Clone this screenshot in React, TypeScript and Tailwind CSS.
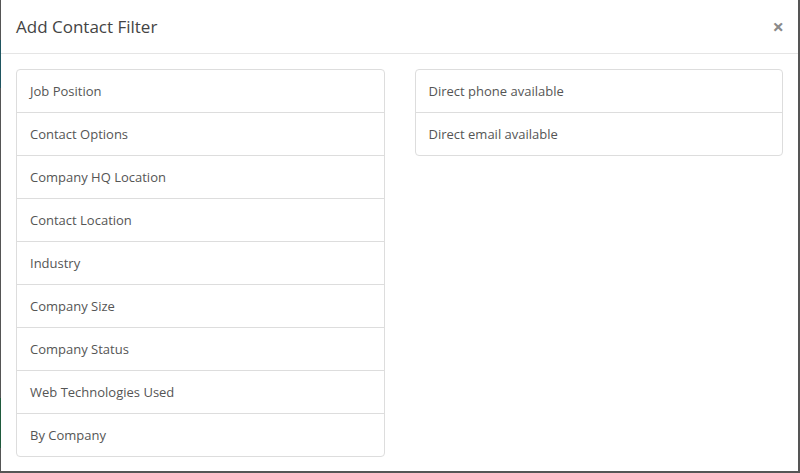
const LEFT = [
  'Job Position',
  'Contact Options',
  'Company HQ Location',
  'Contact Location',
  'Industry',
  'Company Size',
  'Company Status',
  'Web Technologies Used',
  'By Company',
]

const RIGHT = ['Direct phone available', 'Direct email available']

function FilterList({ items }: { items: string[] }) {
  return (
    <ul className="flex flex-col rounded-[4px] border border-[#dddddd] bg-white">
      {items.map((label, i) => (
        <li
          key={label}
          className={`px-[13px] pt-[11px] text-[13px] leading-[20px] text-[#555555] ${
            i > 0 ? 'h-[43px] border-t border-[#dddddd]' : 'h-[42px]'
          }`}
        >
          {label}
        </li>
      ))}
    </ul>
  )
}

export default function App() {
  return (
    <div
      className="flex h-[473px] w-[800px] bg-[#555555]"
      style={{ fontFamily: '"Open Sans", "Liberation Sans", sans-serif' }}
    >
      {/* backdrop sliver showing the page behind */}
      <div className="flex w-px flex-col">
        <div className="h-[40px] bg-[#555555]" />
        <div className="h-[48px] bg-[#1f5560]" />
        <div className="h-[310px] bg-[#555555]" />
        <div className="h-[50px] bg-[#1f5a3c]" />
        <div className="flex-1 bg-[#555555]" />
      </div>
      <div className="flex h-[471px] w-[797px] flex-col bg-white">
        <div className="flex h-[54px] items-center justify-between border-b border-[#e5e5e5] pl-[15px] pr-[14px]">
          <h4 className="text-[17px] leading-[24px] text-[#444444]">Add Contact Filter</h4>
          <button className="text-[20px] font-bold leading-none text-[#8a8a8a]">×</button>
        </div>
        <div className="grid grid-cols-2 gap-[30px] px-[15px] pt-[15px]">
          <FilterList items={LEFT} />
          <div>
            <FilterList items={RIGHT} />
          </div>
        </div>
      </div>
    </div>
  )
}
